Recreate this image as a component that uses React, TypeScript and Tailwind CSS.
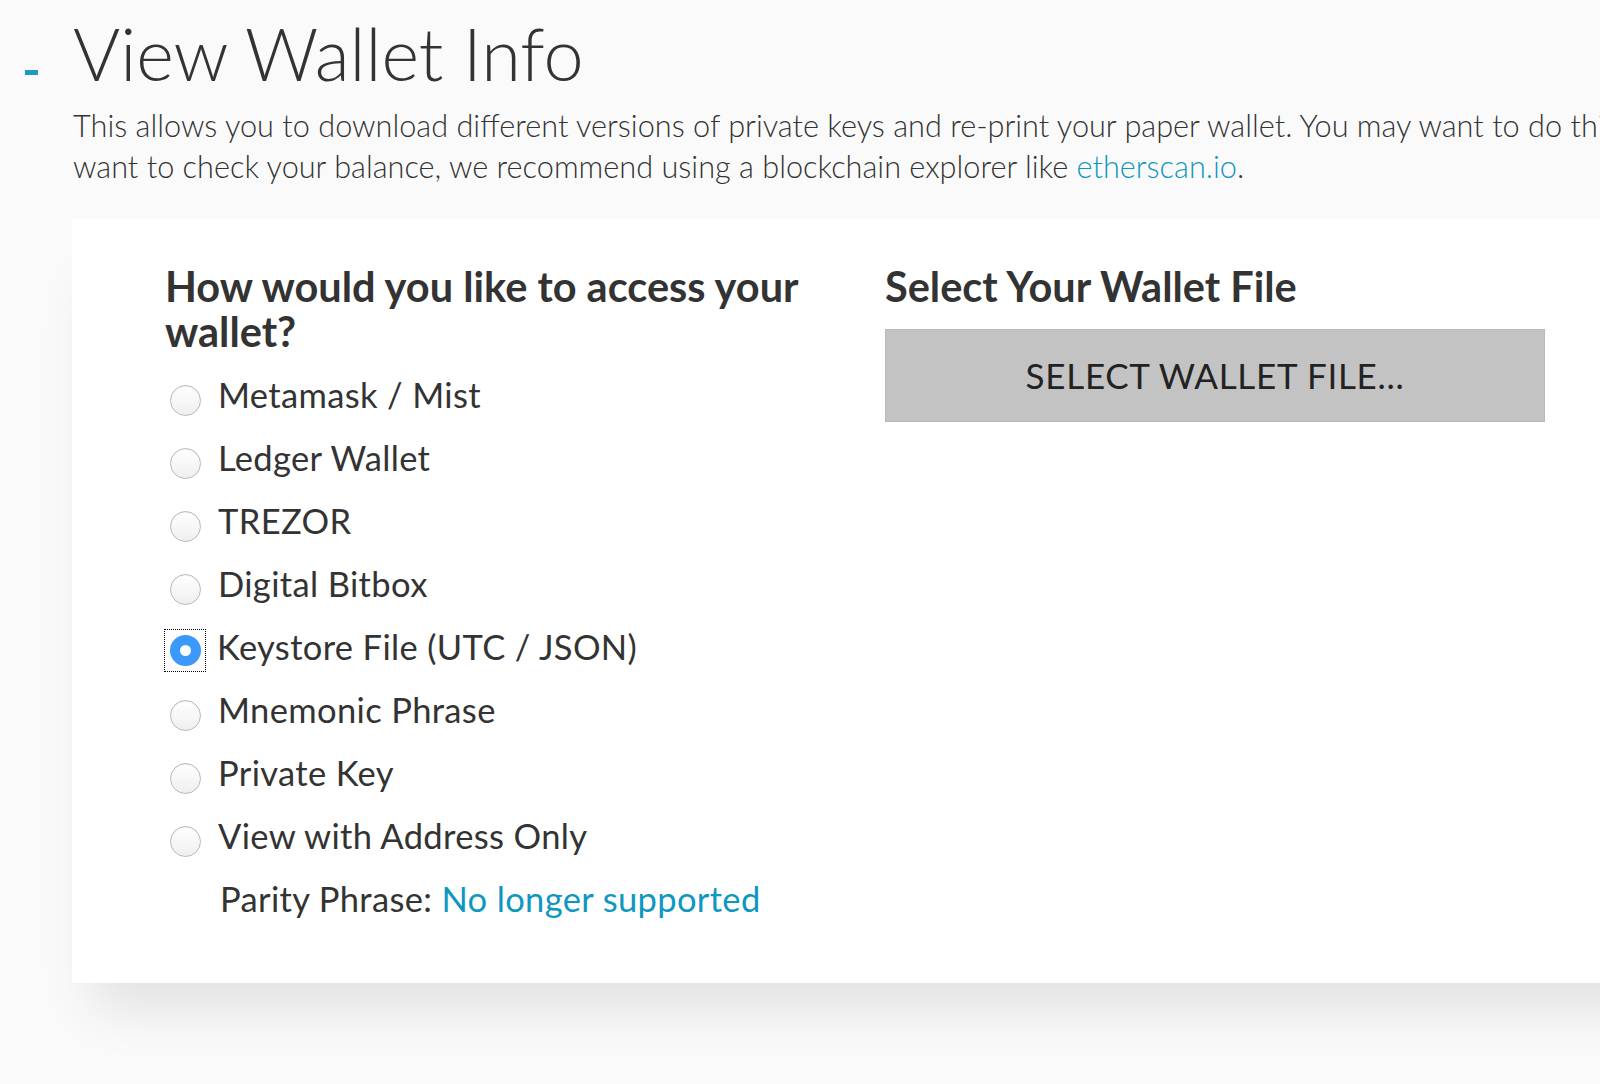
import React from "react";

const options = [
  "Metamask / Mist",
  "Ledger Wallet",
  "TREZOR",
  "Digital Bitbox",
  "Keystore File (UTC / JSON)",
  "Mnemonic Phrase",
  "Private Key",
  "View with Address Only",
];

function Radio({ checked }: { checked: boolean }) {
  if (checked) {
    return (
      <span className="-ml-[6px] -mr-[6px] mt-[8px] flex h-[43px] w-[42px] shrink-0 items-center justify-center border border-dotted border-black">
        <span className="flex h-[31px] w-[31px] items-center justify-center rounded-full bg-[#3b99fc]">
          <span className="h-[11px] w-[11px] rounded-full bg-white" />
        </span>
      </span>
    );
  }
  return (
    <span className="mt-[11px] h-[31px] w-[31px] shrink-0 rounded-full border border-[#b9b9b9] bg-gradient-to-b from-white to-[#efefef] shadow-[inset_0_1px_1px_rgba(0,0,0,0.05)]" />
  );
}

export default function App() {
  const selected = 4;

  return (
    <div className="min-h-[1084px] w-full overflow-hidden bg-[#fafafa] font-['Lato','Noto_Sans',sans-serif] text-[#333]">
      {/* header */}
      <div className="flex items-start pt-[11px]">
        <span className="ml-[25px] mt-[59px] h-[5px] w-[13px] shrink-0 bg-[#1a9ac4]" />
        <h1 className="ml-[35px] whitespace-nowrap text-[72px] font-light leading-[85px]">
          View Wallet Info
        </h1>
      </div>
      <p className="ml-[73px] mt-[9px] whitespace-nowrap text-[30.7px] font-light leading-[41px]">
        This allows you to download different versions of private keys and re-print your paper wallet. You may want to do this in order to import your account into Geth/Mist. If you
        <br />
        want to check your balance, we recommend using a blockchain explorer like{" "}
        <a className="text-[#0e97c0]">etherscan.io</a>.
      </p>

      {/* card */}
      <div className="ml-[72px] mt-[32px] w-[1600px] bg-white pb-[53px] pl-[93px] pt-[45px] shadow-[0_45px_50px_-20px_rgba(0,0,0,0.1)]">
        <div className="flex gap-[30px]">
          <div className="w-[690px] shrink-0">
            <h3 className="text-[41.5px] font-bold leading-[45px]">
              How would you like to access your wallet?
            </h3>
            <div className="mt-[9px]">
              {options.map((label, i) => (
                <label key={label} className="flex h-[63px] items-center gap-[17px] pl-[5px]">
                  <Radio checked={i === selected} />
                  <span className="text-[34.5px] leading-[63px] tracking-[0.35px]">{label}</span>
                </label>
              ))}
              <p className="pl-[55px] text-[34.5px] leading-[63px] tracking-[0.35px]">
                Parity Phrase: <a className="text-[#0e97c0]">No longer supported</a>
              </p>
            </div>
          </div>
          <div className="w-[660px] shrink-0">
            <h3 className="text-[41.5px] font-bold leading-[45px]">Select Your Wallet File</h3>
            <button className="mt-[20px] flex h-[93px] w-[660px] items-center justify-center border border-[#b8b8b8] bg-[#c3c3c3] text-[35px] tracking-[0.7px] text-[#222]">
              SELECT WALLET FILE...
            </button>
          </div>
        </div>
      </div>
    </div>
  );
}
